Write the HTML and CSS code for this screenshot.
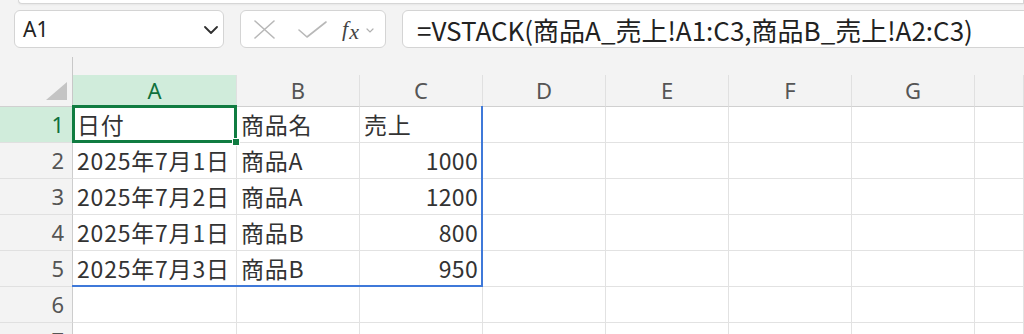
FILE: index.html
```html
<!DOCTYPE html>
<html lang="ja">
<head>
    <meta charset="UTF-8">
    <meta name="viewport" content="width=device-width, initial-scale=1.0">
    <title>Excel - VSTACK</title>
    <link rel="stylesheet" href="styles.css">
</head>
<body>
    <div class="ribbon-edge"></div>

    <div class="formula-row">
        <div class="name-box">
            <span>A1</span>
            <svg class="name-chevron" width="14" height="8" viewBox="0 0 14 8"><path d="M1 1 L7 7 L13 1" fill="none" stroke="#303030" stroke-width="1.8" stroke-linecap="round" stroke-linejoin="round"/></svg>
        </div>
        <div class="fx-buttons">
            <svg class="icon-cancel" width="21" height="19" viewBox="0 0 21 19"><path d="M1 1 L20 18 M20 1 L1 18" stroke="#b8b8b8" stroke-width="1.6" stroke-linecap="round"/></svg>
            <svg class="icon-enter" width="29" height="17" viewBox="0 0 29 17"><path d="M1 9 L9 16 L28 1" fill="none" stroke="#b8b8b8" stroke-width="1.6" stroke-linecap="round" stroke-linejoin="round"/></svg>
            <span class="fx"><span class="fx-f">f</span><span class="fx-x">x</span></span>
            <svg class="fx-chevron" width="8" height="5" viewBox="0 0 8 5"><path d="M1 1 L4 4 L7 1" fill="none" stroke="#b0b0b0" stroke-width="1.2" stroke-linecap="round"/></svg>
        </div>
        <div class="formula-input">=VSTACK(商品A_売上!A1:C3,商品B_売上!A2:C3)</div>
    </div>

    <div class="sheet">
        <div class="grid">
            <div class="corner">
                <svg width="21" height="18" viewBox="0 0 21 18"><polygon points="0,18 21,18 21,0" fill="#c4c4c4"/></svg>
            </div>
            <div class="col-head selected">A</div>
            <div class="col-head">B</div>
            <div class="col-head">C</div>
            <div class="col-head">D</div>
            <div class="col-head">E</div>
            <div class="col-head">F</div>
            <div class="col-head">G</div>
            <div class="col-head"></div>

            <div class="row-head selected">1</div>
            <div class="cell">日付</div>
            <div class="cell">商品名</div>
            <div class="cell">売上</div>
            <div class="cell"></div><div class="cell"></div><div class="cell"></div><div class="cell"></div><div class="cell"></div>

            <div class="row-head">2</div>
            <div class="cell">2025年7月1日</div>
            <div class="cell">商品A</div>
            <div class="cell num">1000</div>
            <div class="cell"></div><div class="cell"></div><div class="cell"></div><div class="cell"></div><div class="cell"></div>

            <div class="row-head">3</div>
            <div class="cell">2025年7月2日</div>
            <div class="cell">商品A</div>
            <div class="cell num">1200</div>
            <div class="cell"></div><div class="cell"></div><div class="cell"></div><div class="cell"></div><div class="cell"></div>

            <div class="row-head">4</div>
            <div class="cell">2025年7月1日</div>
            <div class="cell">商品B</div>
            <div class="cell num">800</div>
            <div class="cell"></div><div class="cell"></div><div class="cell"></div><div class="cell"></div><div class="cell"></div>

            <div class="row-head">5</div>
            <div class="cell">2025年7月3日</div>
            <div class="cell">商品B</div>
            <div class="cell num">950</div>
            <div class="cell"></div><div class="cell"></div><div class="cell"></div><div class="cell"></div><div class="cell"></div>

            <div class="row-head">6</div>
            <div class="cell"></div><div class="cell"></div><div class="cell"></div><div class="cell"></div>
            <div class="cell"></div><div class="cell"></div><div class="cell"></div><div class="cell"></div>

            <div class="row-head">7</div>
            <div class="cell"></div><div class="cell"></div><div class="cell"></div><div class="cell"></div>
            <div class="cell"></div><div class="cell"></div><div class="cell"></div><div class="cell"></div>
        </div>

        <!-- spill range + active cell drawn over the grid -->
        <div class="spill-border"></div>
        <div class="active-cell"><span class="fill-handle"></span></div>
    </div>
</body>
</html>
```

FILE: styles.css
```css
* { box-sizing: border-box; }
html, body { margin: 0; height: 334px; overflow: hidden; }
body { background-color: #f3f3f3; font-family: "Noto Sans", "Noto Sans CJK JP", sans-serif; color: #333; }

/* bottom edge of the ribbon panel above */
.ribbon-edge { height: 4px; margin-left: 18px; background-color: #fff; border: 1px solid #d6d6d6; border-top: none; border-radius: 0 0 0 8px; box-shadow: 0 1px 2px rgba(0,0,0,0.05); }

/* name box / buttons / formula bar */
.formula-row { display: flex; gap: 16px; height: 38px; margin: 6px -40px 0 14px; }
.name-box, .fx-buttons, .formula-input { background-color: #fff; border: 1px solid #d4d4d4; border-radius: 6px; }
.name-box { width: 210px; display: flex; align-items: center; justify-content: space-between; padding: 0 5px 0 8px; font-size: 21px; color: #222; }
.name-chevron { margin-top: 1px; }

.fx-buttons { width: 146px; display: flex; align-items: center; padding-left: 13px; }
.icon-enter { margin-left: 23px; }
.fx { margin-left: 15px; font-family: "Liberation Serif", serif; font-style: italic; font-size: 22px; color: #444; line-height: 1; }
.fx-x { position: relative; top: 3px; margin-left: 1px; }
.fx-chevron { margin-left: 7px; margin-top: 2px; }

.formula-input { flex: 1; display: flex; align-items: center; padding-left: 14px; font-family: "Noto Sans CJK JP", sans-serif; font-size: 26px; color: #222; white-space: nowrap; }

/* sheet grid */
.sheet { position: relative; margin-top: 9px; }
.grid { display: grid; grid-template-columns: 73px 164px repeat(6, 123px) 1fr; grid-template-rows: 50px repeat(7, 36px); }

.corner { display: flex; align-items: flex-end; justify-content: flex-end; padding: 0 5px 6px 0; border-right: 1px solid #c8c8c8; border-bottom: 1px solid #d0d0d0; }

.col-head { align-self: end; height: 32px; line-height: 31px; text-align: center; font-size: 22px; color: #555; border-right: 1px solid #e0e0e0; border-bottom: 1px solid #d0d0d0; }
.row-head { text-align: right; padding-right: 8px; font-size: 22px; line-height: 35px; color: #555; border-right: 1px solid #cdcdcd; border-bottom: 1px solid #e0e0e0; }
.col-head.selected, .row-head.selected { background-color: #d0ecdb; color: #0f703b; }

.cell { background-color: #fff; border-right: 1px solid #e2e2e2; border-bottom: 1px solid #e2e2e2; padding: 0 4px; font-family: "Noto Sans CJK JP", sans-serif; font-size: 23px; line-height: 35px; letter-spacing: 0.8px; color: #333; white-space: nowrap; overflow: hidden; }
.cell.num { text-align: right; padding-right: 4px; letter-spacing: 0.3px; }

.spill-border { position: absolute; left: 72px; top: 49px; width: 411px; height: 181px; border-right: 2px solid #3f79d9; border-bottom: 2px solid #3f79d9; pointer-events: none; }
.active-cell { position: absolute; left: 72px; top: 48px; width: 165px; height: 38px; border: 3px solid #107c41; }
.fill-handle { position: absolute; right: -6px; bottom: -6px; width: 8px; height: 8px; background-color: #107c41; border: 1px solid #fff; }
```
